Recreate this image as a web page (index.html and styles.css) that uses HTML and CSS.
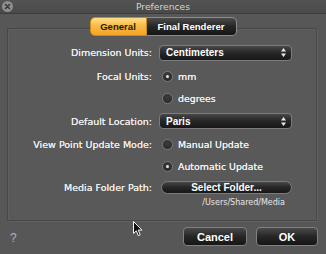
FILE: index.html
```html
<!DOCTYPE html>
<html>
<head>
<meta charset="utf-8">
<link rel="stylesheet" href="styles.css">
</head>
<body>
<div class="window">
  <header class="titlebar">
    <span class="close"><svg width="11" height="11" viewBox="0 0 11 11"><circle cx="5.5" cy="5.5" r="5.5" fill="#8e8e8e"/><path d="M3.5 3.5 L7.5 7.5 M7.5 3.5 L3.5 7.5" stroke="#3a3a3a" stroke-width="1.6" stroke-linecap="round"/></svg></span>
    <span class="title">Preferences</span>
    <span></span>
  </header>

  <div class="tabs">
    <span class="tab tab-active">General</span>
    <span class="tab">Final Renderer</span>
  </div>

  <section class="group">
    <div class="label">Dimension Units:</div>
    <div class="popup"><span>Centimeters</span><svg width="5" height="9" viewBox="0 0 5 9"><path d="M2.5 0 L5 3.5 L0 3.5 Z M0 5.5 L5 5.5 L2.5 9 Z" fill="#e8e8e8"/></svg></div>

    <div class="label">Focal Units:</div>
    <div class="radio-row"><span class="radio checked"></span><span>mm</span></div>

    <div class="label"></div>
    <div class="radio-row"><span class="radio"></span><span>degrees</span></div>

    <div class="label">Default Location:</div>
    <div class="popup"><span>Paris</span><svg width="5" height="9" viewBox="0 0 5 9"><path d="M2.5 0 L5 3.5 L0 3.5 Z M0 5.5 L5 5.5 L2.5 9 Z" fill="#e8e8e8"/></svg></div>

    <div class="label">View Point Update Mode:</div>
    <div class="radio-row"><span class="radio"></span><span>Manual Update</span></div>

    <div class="label"></div>
    <div class="radio-row"><span class="radio checked"></span><span>Automatic Update</span></div>

    <div class="label">Media Folder Path:</div>
    <div class="pill">Select Folder...</div>

    <div class="label"></div>
    <div class="path">/Users/Shared/Media</div>
  </section>

  <footer class="footer">
    <span class="help">?</span>
    <div class="actions">
      <span class="btn btn-cancel">Cancel</span>
      <span class="btn btn-ok">OK</span>
    </div>
  </footer>

  <svg class="cursor" width="11" height="16" viewBox="0 0 11 16"><path d="M0.5 0.5 L0.5 12.5 L3.3 9.8 L5.3 14.6 L7.2 13.8 L5.2 9.1 L9 9.1 Z" fill="#111" stroke="#f4f4f4" stroke-width="1" stroke-linejoin="round"/></svg>
</div>
</body>
</html>
```
FILE: styles.css
```css
html, body {
  margin: 0;
  padding: 0;
}
body {
  width: 326px;
  height: 254px;
  overflow: hidden;
  background: #575757;
  font-family: "DejaVu Sans", sans-serif;
  color: #ececec;
}
.window {
  position: relative;
  width: 326px;
  height: 254px;
}
.titlebar {
  display: grid;
  grid-template-columns: 40px 1fr 40px;
  align-items: center;
  height: 13px;
  background: linear-gradient(#535353, #4a4a4a);
  border-bottom: 1px solid #3c3c3c;
}
.close {
  display: flex;
  padding-left: 2px;
  margin-top: -1px;
}
.title {
  text-align: center;
  font-size: 9.2px;
  color: #d4d4d4;
  line-height: 13px;
}
.tabs {
  display: flex;
  justify-content: center;
  margin-top: 3px;
  margin-bottom: -8px;
  position: relative;
  z-index: 1;
}
.tab {
  display: flex;
  align-items: center;
  justify-content: center;
  height: 19px;
  box-sizing: border-box;
  font: bold 9.6px "Liberation Sans", sans-serif;
  color: #fff;
  border: 1px solid #8c8c8c;
  background: linear-gradient(#4c4c4c, #262626 50%, #161616);
  width: 90px;
  border-radius: 0 5px 5px 0;
  border-left: none;
}
.tab-active {
  width: 57px;
  color: #2a1800;
  border-left: 1px solid #c98a1c;
  border-color: #c98a1c;
  border-radius: 5px 0 0 5px;
  background: linear-gradient(#fde08a, #f8bc45 45%, #f2a425);
}
.group {
  margin: 0 9px 0 7px;
  height: 193px;
  box-sizing: border-box;
  border: 1px solid #474747;
  border-right-color: #4a4a4a;
  box-shadow: inset 1px 1px 0 rgba(255,255,255,0.04), 1px 1px 0 rgba(255,255,255,0.06);
  background: #595959;
  padding-top: 12px;
  display: grid;
  grid-template-columns: 144px 133px;
  grid-template-rows: 23px 24px 20px 26px 20px 24px 18px 12px;
  column-gap: 7px;
  align-items: center;
}
.label {
  text-align: right;
  font-size: 9.5px;
  color: #ececec;
  text-shadow: 0 0 0.4px #fff;
  white-space: nowrap;
}
.popup {
  display: flex;
  align-items: center;
  justify-content: space-between;
  height: 16px;
  box-sizing: border-box;
  border: 1px solid #7c7c7c;
  border-radius: 4px;
  background: linear-gradient(#474747, #262626 50%, #171717);
  padding: 0 5px 0 6px;
  font: bold 10px "Liberation Sans", sans-serif;
  color: #fff;
}
.radio-row {
  display: flex;
  align-items: center;
  gap: 5px;
  margin-left: 3px;
  font-size: 9.4px;
  color: #f0f0f0;
  text-shadow: 0 0 0.4px #fff;
}
.radio {
  width: 11px;
  height: 11px;
  box-sizing: border-box;
  border-radius: 50%;
  border: 1px solid #7a7a7a;
  background: radial-gradient(circle at 50% 35%, #3e3e3e, #232323);
  display: flex;
  align-items: center;
  justify-content: center;
}
.radio.checked::after {
  content: "";
  width: 3px;
  height: 3px;
  border-radius: 50%;
  background: #e4e4e4;
}
.pill {
  margin-left: 2px;
  height: 13px;
  box-sizing: border-box;
  border: 1px solid #7c7c7c;
  border-radius: 7px;
  background: linear-gradient(#474747, #262626 50%, #171717);
  display: flex;
  align-items: center;
  justify-content: center;
  font: bold 10px "Liberation Sans", sans-serif;
  color: #fff;
}
.path {
  text-align: right;
  padding-right: 7px;
  font-size: 8px;
  color: #e8e8e8;
  white-space: nowrap;
}
.footer {
  display: flex;
  justify-content: space-between;
  align-items: flex-start;
  height: 33px;
}
.help {
  margin: 10px 0 0 10px;
  font: 12px "Liberation Sans", sans-serif;
  color: #b4b4b4;
}
.actions {
  display: flex;
  gap: 9px;
  margin: 6px 8px 0 0;
}
.btn {
  display: flex;
  align-items: center;
  justify-content: center;
  height: 19px;
  box-sizing: border-box;
  border: 1px solid #808080;
  border-radius: 4px;
  background: linear-gradient(#4a4a4a, #262626 50%, #161616);
  font: bold 11px "Liberation Sans", sans-serif;
  color: #fff;
}
.btn-cancel { width: 64px; }
.btn-ok { width: 62px; }
.cursor {
  position: absolute;
  left: 133px;
  top: 221px;
}
```
